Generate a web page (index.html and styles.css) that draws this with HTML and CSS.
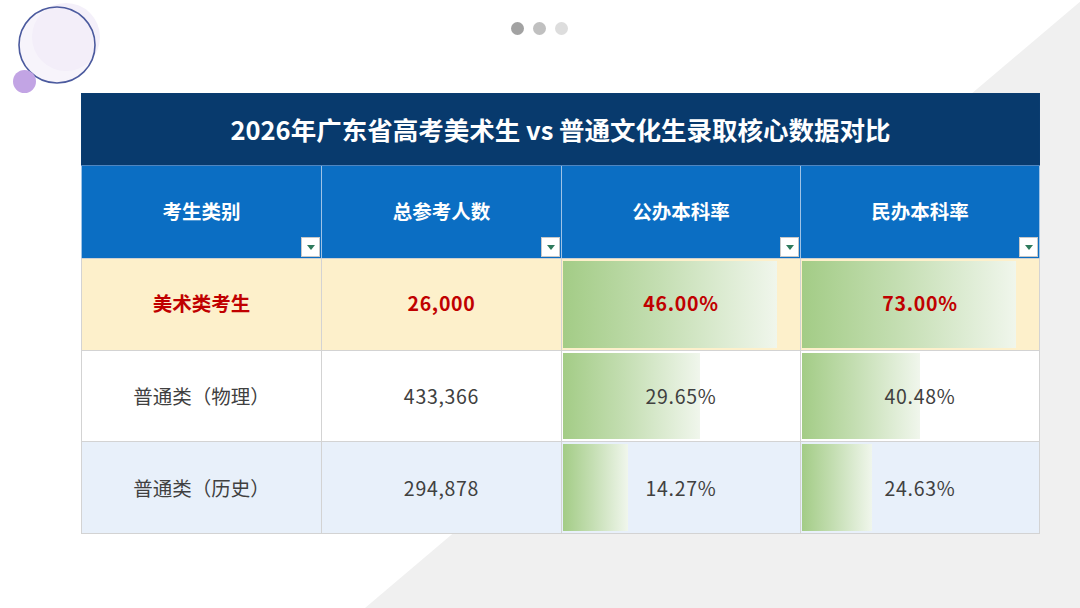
FILE: index.html
```html
<!DOCTYPE html>
<html lang="zh-CN">
<head>
<meta charset="utf-8">
<title>2026年广东省高考美术生 vs 普通文化生录取核心数据对比</title>
<link rel="stylesheet" href="styles.css">
</head>
<body>
<div class="page">
  <div class="decor">
    <svg width="110" height="100" viewBox="0 0 110 100">
      <circle cx="66" cy="37" r="34" fill="#f4f0fa"/>
      <circle cx="57" cy="45" r="38" fill="#f1ecf8" fill-opacity="0.6" stroke="#4b5a9e" stroke-width="1.6"/>
      <circle cx="24.5" cy="81.5" r="11.5" fill="#c2a4e4"/>
    </svg>
  </div>
  <div class="topbar">
    <span class="dot d1"></span><span class="dot d2"></span><span class="dot d3"></span>
  </div>
  <table class="grid">
    <colgroup>
      <col class="c1"><col class="c2"><col class="c3"><col class="c4">
    </colgroup>
    <thead>
      <tr class="title-row"><th colspan="4">2026年广东省高考美术生 vs 普通文化生录取核心数据对比</th></tr>
      <tr class="head-row">
        <th>考生类别<span class="dd"></span></th>
        <th>总参考人数<span class="dd"></span></th>
        <th>公办本科率<span class="dd"></span></th>
        <th>民办本科率<span class="dd"></span></th>
      </tr>
    </thead>
    <tbody>
      <tr class="row art">
        <td>美术类考生</td>
        <td class="num">26,000</td>
        <td class="num bar" style="--w:214px">46.00%</td>
        <td class="num bar" style="--w:214px">73.00%</td>
      </tr>
      <tr class="row phys">
        <td>普通类（物理）</td>
        <td class="num">433,366</td>
        <td class="num bar" style="--w:137px">29.65%</td>
        <td class="num bar" style="--w:118px">40.48%</td>
      </tr>
      <tr class="row hist">
        <td>普通类（历史）</td>
        <td class="num">294,878</td>
        <td class="num bar" style="--w:65px">14.27%</td>
        <td class="num bar" style="--w:70px">24.63%</td>
      </tr>
    </tbody>
  </table>
</div>
</body>
</html>
```

FILE: styles.css
```css
* { box-sizing: border-box; }
html, body { margin: 0; padding: 0; }
body {
  width: 1080px;
  height: 608px;
  overflow: hidden;
  background: #ffffff;
  font-family: "Noto Sans CJK SC", "Noto Sans", sans-serif;
}
.page {
  position: relative;
  width: 1080px;
  height: 608px;
  overflow: hidden;
}
.page::before {
  content: "";
  position: absolute;
  inset: 0;
  background: #f0f0f0;
  clip-path: polygon(1082px 0, 1080px 608px, 365px 608px);
  z-index: 0;
}
.decor {
  position: absolute;
  left: 0;
  top: 0;
  z-index: 1;
}
.decor svg { display: block; }
.topbar {
  position: relative;
  z-index: 1;
  height: 93px;
  padding-top: 22px;
  padding-right: 2px;
  display: flex;
  justify-content: center;
  gap: 9px;
}
.dot {
  width: 13px;
  height: 13px;
  border-radius: 50%;
  display: block;
}
.d1 { background: #a2a2a2; }
.d2 { background: #c0c0c0; }
.d3 { background: #dddddd; }

.grid {
  position: relative;
  z-index: 1;
  margin-left: 81px;
  width: 958px;
  border-collapse: collapse;
  table-layout: fixed;
}
.c1 { width: 240px; }
.c2 { width: 240px; }
.c3 { width: 239px; }
.c4 { width: 239px; }

.title-row th {
  height: 72px;
  background: #083a6d;
  color: #ffffff;
  font-size: 25.5px;
  font-weight: 700;
  text-align: center;
  padding: 0 0 3px;
  border: 1px solid #0a3c70;
  border-bottom: 1px solid #4f86c0;
}
.head-row th {
  position: relative;
  height: 93px;
  background: #0b6ec3;
  color: #ffffff;
  font-size: 19.5px;
  font-weight: 700;
  text-align: center;
  padding: 0 0 3px;
  border-left: 1px solid #9fc3e6;
  border-right: 1px solid #9fc3e6;
  border-top: 1px solid #4f86c0;
  border-bottom: 1px solid #d0d0d0;
}
.dd {
  position: absolute;
  right: 1px;
  bottom: 1px;
  width: 19px;
  height: 20px;
  background: #ffffff;
  border: 1px solid #c8c8c8;
}
.dd::after {
  content: "";
  position: absolute;
  left: 5px;
  top: 7px;
  border-left: 4px solid transparent;
  border-right: 4px solid transparent;
  border-top: 5px solid #2d7a5c;
}

.row td {
  text-align: center;
  padding: 0 0 2px;
  border: 1px solid #d3d3d3;
  font-size: 19.5px;
  color: #404040;
}
.row td.num {
  letter-spacing: 0.7px;
}
.art td {
  height: 92px;
  padding-bottom: 5px;
  background-color: #fdf0cb;
  color: #c00000;
  font-weight: 700;
}
.phys td {
  height: 91px;
  background-color: #ffffff;
}
.hist td {
  height: 92px;
  padding-bottom: 0;
  background-color: #e8f0fa;
}
.bar {
  background-image: linear-gradient(to right, #a3cc86 0%, #c4deb2 45%, #f0f6ec 100%);
  background-repeat: no-repeat;
  background-position: 1px 2px;
  background-size: var(--w) calc(100% - 4px);
}
```
